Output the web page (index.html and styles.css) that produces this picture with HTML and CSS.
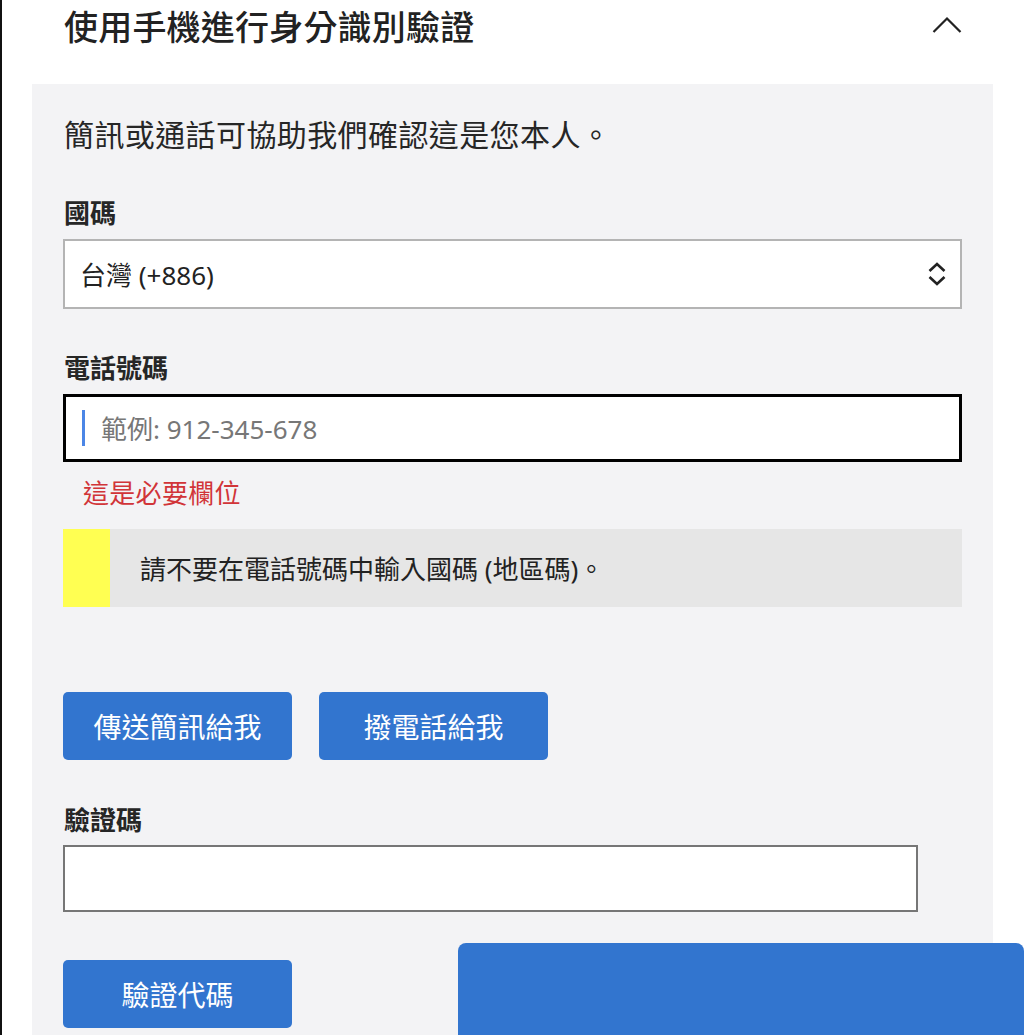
FILE: index.html
```html
<!DOCTYPE html>
<html lang="zh-Hant">
<head>
<meta charset="utf-8">
<title>使用手機進行身分識別驗證</title>
<link rel="stylesheet" href="styles.css">
</head>
<body>
<div class="page">
  <header class="header">
    <h1 class="title">使用手機進行身分識別驗證</h1>
    <svg class="collapse" width="30" height="18" viewBox="0 0 30 18"><polyline points="1.5,16 15,2.5 28.5,16" fill="none" stroke="#222" stroke-width="2.2"/></svg>
  </header>
  <section class="panel">
    <p class="intro">簡訊或通話可協助我們確認這是您本人。</p>

    <div class="label label-first">國碼</div>
    <div class="select">
      <span class="select-text">台灣 (+886)</span>
      <svg class="updown" width="20" height="26" viewBox="0 0 20 26"><polyline points="2.5,10 10,3 17.5,10" fill="none" stroke="#222" stroke-width="2.6"/><polyline points="2.5,16 10,23 17.5,16" fill="none" stroke="#222" stroke-width="2.6"/></svg>
    </div>

    <div class="label">電話號碼</div>
    <div class="phone">
      <span class="caret"></span>
      <span class="placeholder">範例: 912-345-678</span>
    </div>
    <div class="error">這是必要欄位</div>

    <div class="notice">
      <div class="notice-bar"></div>
      <div class="notice-text">請不要在電話號碼中輸入國碼 (地區碼)。</div>
    </div>

    <div class="actions">
      <button class="btn">傳送簡訊給我</button>
      <button class="btn">撥電話給我</button>
    </div>

    <div class="label label-code">驗證碼</div>
    <div class="code-input"></div>

    <button class="btn btn-verify">驗證代碼</button>
  </section>
  <div class="floating"></div>
</div>
</body>
</html>
```

FILE: styles.css
```css
html, body {
  margin: 0;
  padding: 0;
  background: #ffffff;
}
body {
  font-family: "Noto Sans", "Noto Sans CJK TC", sans-serif;
  color: #1f1f1f;
  overflow: hidden;
}
.page {
  border-left: 2px solid #111;
  min-height: 1035px;
  box-sizing: border-box;
}
.header {
  display: flex;
  align-items: center;
  justify-content: space-between;
  height: 54px;
  padding: 0 62px 0 62px;
  margin-bottom: 30px;
}
.title {
  margin: 0;
  font-size: 34px;
  font-weight: 500;
  line-height: 44px;
  color: #222;
  letter-spacing: 0.2px;
}
.collapse {
  display: block;
  margin-top: -4px;
}
.panel {
  margin-left: 30px;
  width: 961px;
  box-sizing: border-box;
  background: #f3f3f5;
  padding: 31px 31px 40px 31px;
}
.intro {
  margin: 0;
  font-size: 30px;
  line-height: 40px;
  color: #262626;
  padding-left: 1px;
  letter-spacing: 0.4px;
}
.label {
  font-size: 26px;
  line-height: 36px;
  font-weight: 700;
  color: #262626;
  margin-top: 41px;
  margin-bottom: 8px;
  padding-left: 1px;
}
.label-first {
  margin-top: 40px;
  margin-bottom: 8px;
}
.select {
  height: 70px;
  box-sizing: border-box;
  border: 2px solid #b4b4b4;
  background: #fff;
  display: flex;
  align-items: center;
  justify-content: space-between;
  padding: 0 13px 0 15px;
}
.select-text {
  font-size: 26px;
  color: #222;
}
.updown {
  display: block;
}
.phone {
  height: 68px;
  box-sizing: border-box;
  border: 3px solid #000;
  background: #fff;
  display: flex;
  align-items: center;
  padding-left: 16px;
}
.caret {
  width: 3px;
  height: 36px;
  background: #4b86e6;
  margin-right: 16px;
}
.placeholder {
  font-size: 26px;
  color: #777;
}
.error {
  font-size: 26px;
  line-height: 36px;
  color: #d13438;
  margin-top: 13px;
  padding-left: 20px;
  letter-spacing: 0.3px;
}
.notice {
  margin-top: 18px;
  height: 78px;
  display: flex;
  background: #e6e6e6;
}
.notice-bar {
  width: 47px;
  background: #ffff52;
}
.notice-text {
  display: flex;
  align-items: center;
  padding-left: 30px;
  font-size: 26px;
  color: #222;
}
.actions {
  display: flex;
  gap: 27px;
  margin-top: 85px;
}
.btn {
  width: 229px;
  height: 68px;
  border: none;
  border-radius: 5px;
  background: #3275cf;
  color: #fff;
  font-family: "Noto Sans", "Noto Sans CJK TC", sans-serif;
  font-size: 28px;
  padding: 0;
}
.label-code {
  margin-top: 42px;
  margin-bottom: 7px;
}
.code-input {
  width: 855px;
  height: 67px;
  box-sizing: border-box;
  border: 2px solid #767676;
  background: #fff;
}
.btn-verify {
  display: block;
  margin-top: 48px;
}
.floating {
  position: fixed;
  left: 458px;
  right: 0;
  top: 943px;
  height: 200px;
  background: #3275cf;
  border-radius: 8px 8px 0 0;
}
```
